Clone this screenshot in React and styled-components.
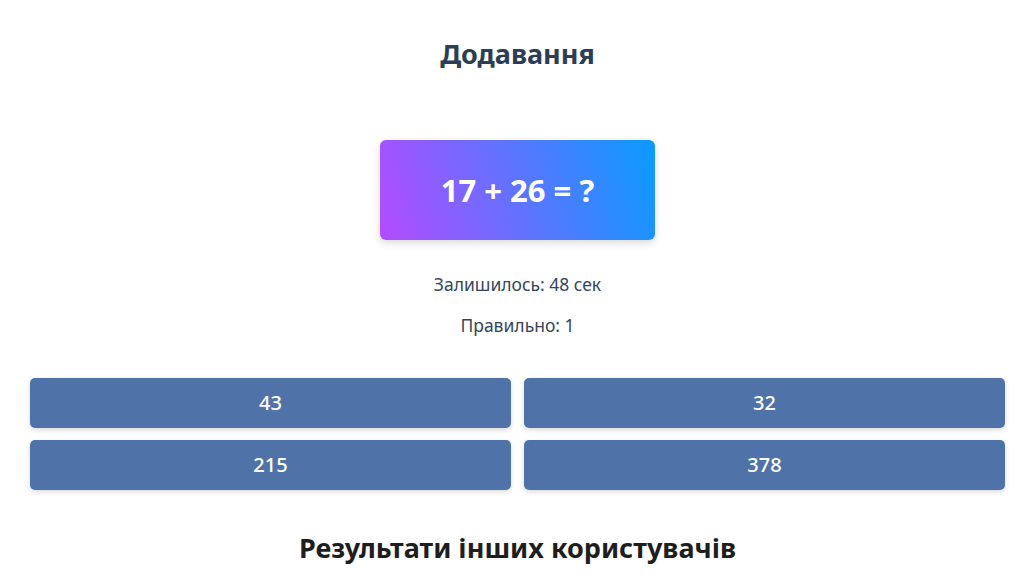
import React from 'react'
import styled, { createGlobalStyle } from 'styled-components'

const GlobalStyle = createGlobalStyle`
  body {
    margin: 0;
    background: #ffffff;
    font-family: "Noto Sans", "Open Sans", sans-serif;
  }
`

const answers = [43, 32, 215, 378]

const App = () => {
  return (
    <>
      <GlobalStyle />
      <Page>
        <Title>Додавання</Title>
        <QuestionCard>17 + 26 = ?</QuestionCard>
        <Info>Залишилось: 48 сек</Info>
        <Info>Правильно: 1</Info>
        <AnswerGrid>
          {answers.map((a) => (
            <AnswerButton key={a}>{a}</AnswerButton>
          ))}
        </AnswerGrid>
        <ResultsTitle>Результати інших користувачів</ResultsTitle>
      </Page>
    </>
  )
}

const Page = styled.div`
  display: flex;
  flex-direction: column;
  align-items: center;
  padding: 34px 27px 0 30px;
`

const Title = styled.h1`
  margin: 0;
  font-size: 27px;
  line-height: 40px;
  font-weight: 700;
  color: #2c3e56;
`

const QuestionCard = styled.div`
  width: 275px;
  height: 100px;
  margin-top: 66px;
  display: flex;
  justify-content: center;
  align-items: center;
  border-radius: 6px;
  background: linear-gradient(72deg, #b44bff, #0a9bff);
  box-shadow: 0 3px 8px rgba(0, 0, 0, 0.15);
  color: #ffffff;
  font-size: 31px;
  font-weight: 700;
`

const Info = styled.div`
  font-size: 17.5px;
  line-height: 22px;
  color: #34465e;
  margin-top: 33px;

  & + & {
    margin-top: 19px;
  }
`

const AnswerGrid = styled.div`
  width: 100%;
  margin-top: 42px;
  display: grid;
  grid-template-columns: 1fr 1fr;
  gap: 12px 13px;
`

const AnswerButton = styled.button`
  height: 50px;
  border: none;
  border-radius: 5px;
  background: #4f73a8;
  box-shadow: 0 2px 5px rgba(0, 0, 0, 0.15);
  color: #ffffff;
  font-family: "Noto Sans", "Open Sans", sans-serif;
  font-size: 20px;
  font-weight: 500;
  line-height: 1;
  cursor: pointer;
`

const ResultsTitle = styled.h2`
  margin: 38px 0 0 0;
  font-size: 27px;
  line-height: 40px;
  font-weight: 700;
  color: #1e1e1e;
`

export default App
